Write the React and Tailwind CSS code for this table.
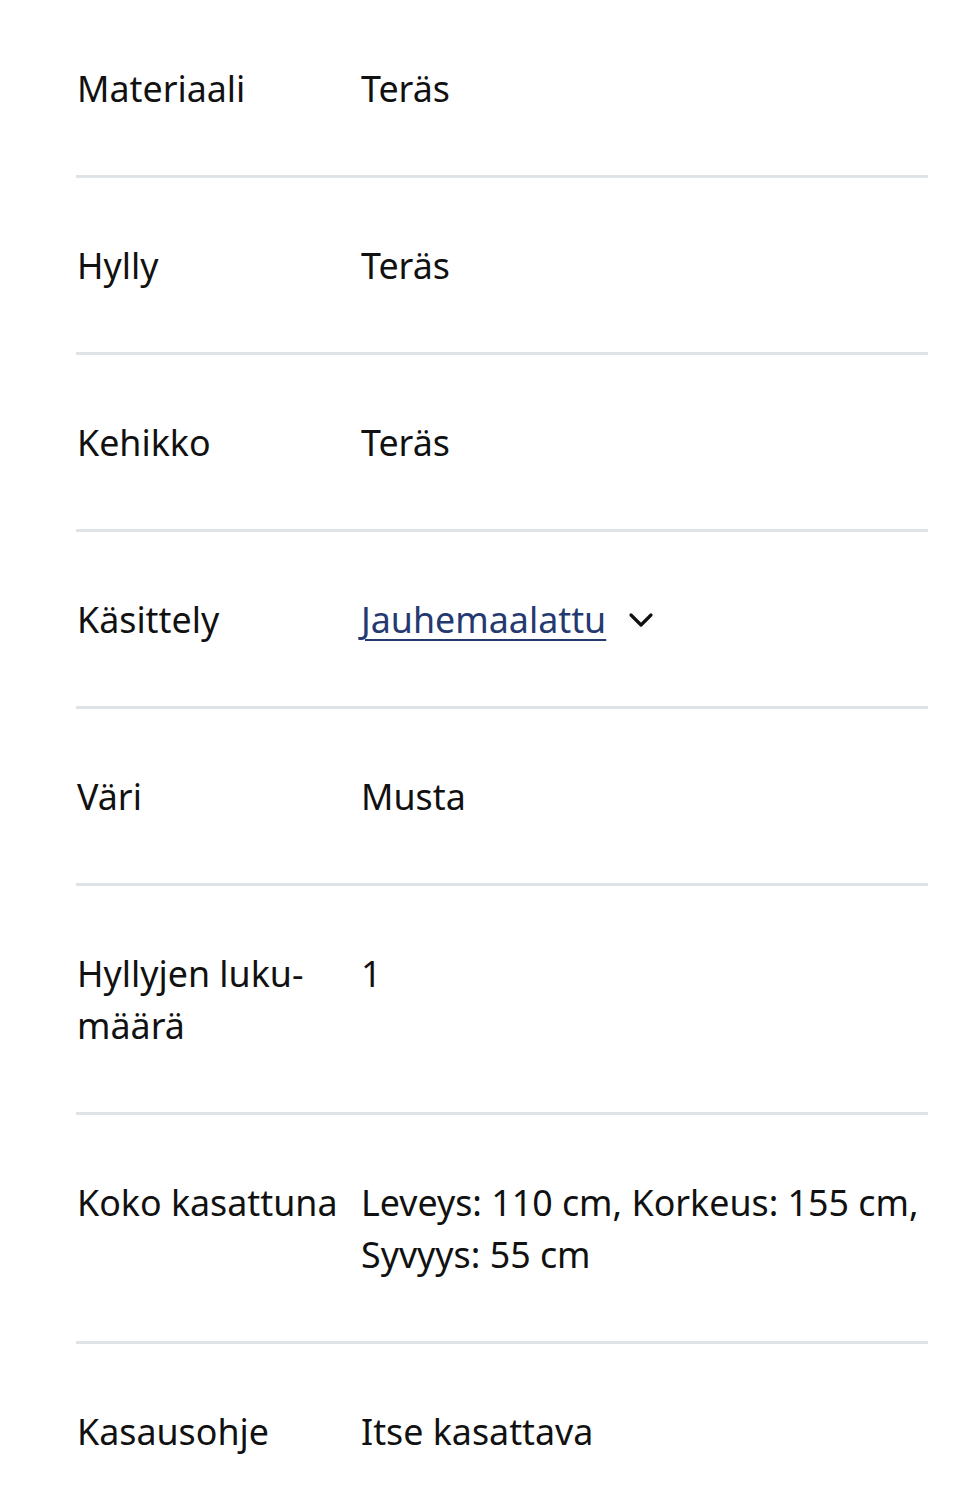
const rows = [
  { label: "Materiaali", value: "Teräs" },
  { label: "Hylly", value: "Teräs" },
  { label: "Kehikko", value: "Teräs" },
  { label: "Käsittely", value: "Jauhemaalattu", link: true },
  { label: "Väri", value: "Musta" },
  { label: "Hyllyjen luku-\nmäärä", value: "1" },
  { label: "Koko kasattuna", value: "Leveys: 110 cm, Korkeus: 155 cm, Syvyys: 55 cm" },
  { label: "Kasausohje", value: "Itse kasattava" },
];

const ChevronDown = () => (
  <svg width="26" height="18" viewBox="0 0 26 18" fill="none" className="ml-[22px] mt-[2px]">
    <path d="M3 4l10 10 10-10" stroke="#111" strokeWidth="3.2" strokeLinecap="round" strokeLinejoin="round" />
  </svg>
);

export default function App() {
  return (
    <div className="min-h-[1504px] bg-white pt-[1px] pl-[77px] pr-[32px] font-['Noto_Sans',sans-serif] text-[35.8px] leading-[52px] text-[#111]">
      {rows.map((row, i) => (
        <div
          key={row.label}
          className={`flex -ml-px pl-px py-[61px] ${i < rows.length - 1 ? "border-b-[3px] border-[#dfe3e8]" : ""}`}
        >
          <div className="w-[284px] shrink-0 whitespace-pre-line">{row.label}</div>
          <div className="flex-1">
            {row.link ? (
              <span className="inline-flex items-center">
                <a href="#" className="text-[#24396f] underline decoration-2 underline-offset-[6px]">
                  {row.value}
                </a>
                <ChevronDown />
              </span>
            ) : (
              row.value
            )}
          </div>
        </div>
      ))}
    </div>
  );
}
